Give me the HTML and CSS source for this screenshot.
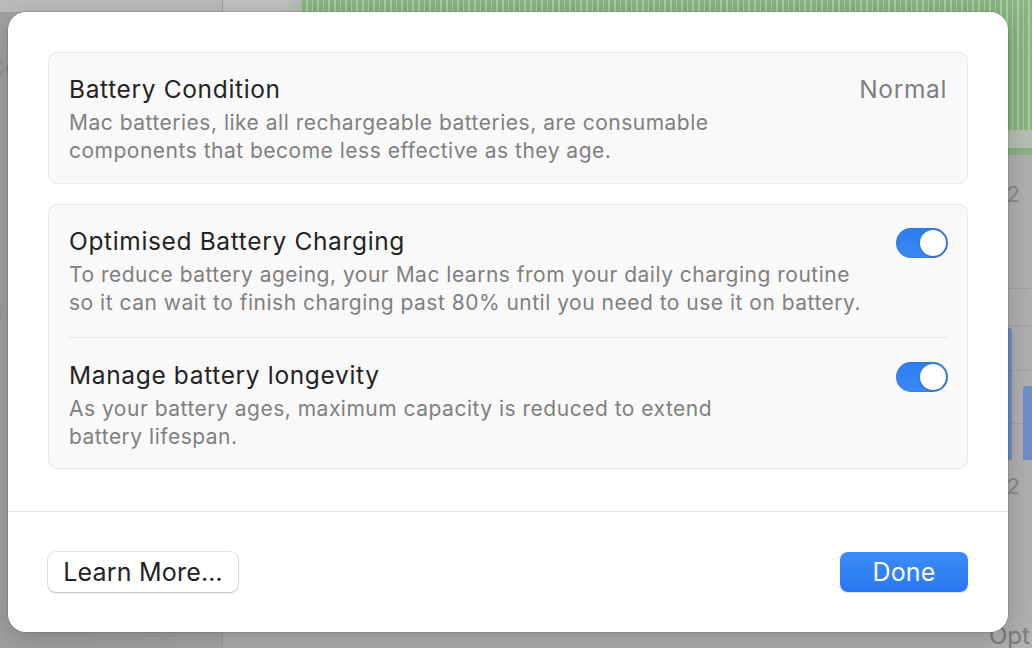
FILE: index.html
```html
<!DOCTYPE html>
<html>
<head>
<meta charset="utf-8">
<link rel="stylesheet" href="styles.css">
</head>
<body>
<div class="backdrop">
  <aside class="side">
    <div class="side-top"></div>
    <div class="side-list">
      <span>Co</span><span>n</span><span>t</span><span>S</span><span>e</span><span>ti</span>
    </div>
  </aside>
  <main class="main">
    <div class="chart-head">
      <div class="chart-gap"></div>
      <div class="chart-green"></div>
    </div>
    <div class="chart-band"></div>
    <div class="chart-body">
      <div class="axis-label one">2</div>
      <div class="bars">
        <div class="bar b1"></div>
        <div class="bar b2"></div>
      </div>
      <div class="axis-label two">2</div>
      <div class="bottom-label">Opt</div>
    </div>
  </main>
</div>

<div class="sheet">
  <div class="sheet-content">
    <section class="card">
      <div class="row">
        <div class="row-text">
          <div class="row-title">Battery Condition</div>
          <div class="row-desc">Mac batteries, like all rechargeable batteries, are consumable<br>components that become less effective as they age.</div>
        </div>
        <div class="row-value">Normal</div>
      </div>
    </section>
    <section class="card">
      <div class="row">
        <div class="row-text">
          <div class="row-title">Optimised Battery Charging</div>
          <div class="row-desc">To reduce battery ageing, your Mac learns from your daily charging routine<br>so it can wait to finish charging past 80% until you need to use it on battery.</div>
        </div>
        <div class="toggle on"><span class="knob"></span></div>
      </div>
      <div class="row sep">
        <div class="row-text">
          <div class="row-title">Manage battery longevity</div>
          <div class="row-desc">As your battery ages, maximum capacity is reduced to extend<br>battery lifespan.</div>
        </div>
        <div class="toggle on"><span class="knob"></span></div>
      </div>
    </section>
  </div>
  <footer class="sheet-footer">
    <button class="btn">Learn More…</button>
    <button class="btn primary">Done</button>
  </footer>
</div>
</body>
</html>
```

FILE: styles.css
```css
* { box-sizing: border-box; }
html, body {
  margin: 0;
  width: 1032px;
  height: 648px;
  overflow: hidden;
}
body {
  font-family: Inter, "Noto Sans", "Liberation Sans", sans-serif;
  background: #a9a9aa;
  position: relative;
}

/* dimmed window behind the sheet */
.backdrop {
  display: flex;
  width: 1032px;
  height: 648px;
}
.side {
  width: 223px;
  display: flex;
  flex-direction: column;
  background: linear-gradient(90deg, #a2a2a3 0, #a9a9aa 100%);
  border-right: 1px solid #9c9c9d;
}
.side-top {
  height: 12px;
  background: #bcbcbe;
}
.side-list {
  display: flex;
  flex-direction: column;
  gap: 50px;
  padding: 40px 0 0 0;
  margin-left: -14px;
  color: #939394;
  font-size: 26px;
}
.main {
  flex: 1;
  display: flex;
  flex-direction: column;
  background: #b1b1b2;
}
.chart-head {
  display: flex;
  height: 130px;
}
.chart-gap {
  width: 79px;
  background: linear-gradient(90deg, #c1c1c3 0, #c1c1c3 75%, #b4bdb2 100%);
}
.chart-green {
  flex: 1;
  background: repeating-linear-gradient(90deg, #8ab481 0, #8ab481 4px, #aecca8 4px, #aecca8 5.6px);
}
.chart-band {
  height: 25px;
  background: linear-gradient(180deg, #b8c0b6 0, #b8c0b6 18px, #8ab481 18px, #8ab481 25px);
}
.chart-body {
  flex: 1;
  position: relative;
  background:
    linear-gradient(#a3a3a4, #a3a3a4) 0 133px / 100% 1px no-repeat,
    linear-gradient(#a3a3a4, #a3a3a4) 0 170px / 100% 1px no-repeat,
    linear-gradient(#a3a3a4, #a3a3a4) 0 215px / 100% 1px no-repeat,
    linear-gradient(#a3a3a4, #a3a3a4) 0 268px / 100% 1px no-repeat,
    #b1b1b2;
}
.axis-label {
  position: absolute;
  right: 12px;
  color: #8a8a8b;
  font-size: 22px;
}
.axis-label.one { top: 26px; }
.axis-label.two { top: 318px; }
.bars {
  position: absolute;
  left: 777px;
  top: 173px;
  height: 132px;
  display: flex;
  align-items: flex-end;
  gap: 11px;
}
.bar {
  width: 12px;
  background: #6e8fc7;
  border-radius: 3px 3px 0 0;
}
.b1 { height: 132px; }
.b2 { height: 74px; }
.bottom-label {
  position: absolute;
  left: 766px;
  top: 466px;
  color: #7d7d7e;
  font-size: 24px;
}

/* the sheet */
.sheet {
  position: absolute;
  left: 8px;
  top: 12px;
  width: 1000px;
  height: 620px;
  background: #ffffff;
  border-radius: 18px;
  box-shadow: 0 0 0 1px rgba(0,0,0,0.10), 0 8px 30px rgba(0,0,0,0.22);
  display: flex;
  flex-direction: column;
}
.sheet-content {
  padding: 40px 40px 0;
  display: flex;
  flex-direction: column;
  gap: 20px;
  height: 499px;
}
.card {
  background: #f9f9f9;
  border: 1px solid #e9e9e9;
  border-radius: 9px;
  padding: 0 20px;
}
.row {
  display: flex;
  justify-content: space-between;
  align-items: flex-start;
  padding: 21px 0 18px;
}
.card:nth-child(2) .row:first-child { padding-bottom: 20px; }
.row.sep {
  border-top: 1px solid #e6e6e6;
  padding-top: 22px;
  padding-bottom: 17px;
}
.row-title {
  font-size: 24.5px;
  line-height: 30px;
  color: #242424;
  letter-spacing: 0.65px;
}
.row-desc {
  margin-top: 5px;
  font-size: 21px;
  line-height: 28px;
  color: #808080;
  letter-spacing: 0.5px;
}
.row-value {
  font-size: 24.5px;
  line-height: 30px;
  color: #808080;
  letter-spacing: 0.65px;
}
.toggle {
  margin-top: 2px;
  margin-right: -1px;
  width: 52px;
  height: 30px;
  border-radius: 15px;
  background: linear-gradient(180deg, #2f7cf0 0, #3b88f6 100%);
  box-shadow: inset 0 0 0 1px rgba(0,0,0,0.06);
  display: flex;
  align-items: center;
  justify-content: flex-end;
  padding: 0 2px;
}
.knob {
  width: 26px;
  height: 26px;
  border-radius: 50%;
  background: #ffffff;
  box-shadow: 0 1px 2px rgba(0,0,0,0.25);
}

.sheet-footer {
  border-top: 1px solid #e5e5e5;
  flex: 1;
  display: flex;
  justify-content: space-between;
  align-items: flex-start;
  padding: 40px 40px 0;
}
.btn {
  font-family: Inter, "Noto Sans", "Liberation Sans", sans-serif;
  height: 40px;
  border-radius: 8px;
  font-size: 25px;
  letter-spacing: 0.2px;
  color: #232323;
  background: #ffffff;
  border: none;
  box-shadow: 0 0 0 1px rgba(0,0,0,0.10), 0 1px 2px rgba(0,0,0,0.18);
  padding: 0 10px;
  width: 190px;
}
.btn.primary {
  width: 128px;
  color: #ffffff;
  background: linear-gradient(180deg, #3b8cf8 0, #2a78f1 100%);
  box-shadow: 0 1px 1px rgba(0,0,0,0.12);
}
```
